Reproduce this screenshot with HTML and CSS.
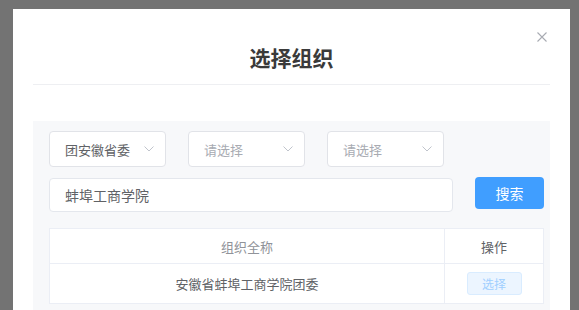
FILE: index.html
```html
<!DOCTYPE html>
<html lang="zh-CN">
<head>
  <meta charset="UTF-8">
  <meta name="viewport" content="width=device-width, initial-scale=1.0">
  <title>选择组织</title>
  <link rel="stylesheet" href="styles.css">
</head>
<body>
  <div class="dialog">
    <div class="dialog-header">
      <h2 class="dialog-title">选择组织</h2>
      <button class="dialog-close" aria-label="关闭">
        <svg width="10" height="10" viewBox="0 0 10 10"><path d="M0.5 0.5 L9.5 9.5 M9.5 0.5 L0.5 9.5" stroke="#a8abb2" stroke-width="1.1" fill="none"/></svg>
      </button>
    </div>

    <div class="dialog-body">
      <div class="panel">
        <div class="filter-row">
          <div class="select">
            <span class="select-value">团安徽省委</span>
            <svg class="chevron" width="10" height="6" viewBox="0 0 10 6"><path d="M0.5 0.5 L5 5 L9.5 0.5" stroke="#c0c4cc" fill="none"/></svg>
          </div>
          <div class="select">
            <span class="select-value placeholder">请选择</span>
            <svg class="chevron" width="10" height="6" viewBox="0 0 10 6"><path d="M0.5 0.5 L5 5 L9.5 0.5" stroke="#c0c4cc" fill="none"/></svg>
          </div>
          <div class="select">
            <span class="select-value placeholder">请选择</span>
            <svg class="chevron" width="10" height="6" viewBox="0 0 10 6"><path d="M0.5 0.5 L5 5 L9.5 0.5" stroke="#c0c4cc" fill="none"/></svg>
          </div>
        </div>

        <div class="search-row">
          <input class="search-input" type="text" value="蚌埠工商学院">
          <button class="btn-search">搜索</button>
        </div>

        <table class="org-table">
          <thead>
            <tr>
              <th class="col-name">组织全称</th>
              <th class="col-op">操作</th>
            </tr>
          </thead>
          <tbody>
            <tr>
              <td>安徽省蚌埠工商学院团委</td>
              <td><button class="btn-pick">选择</button></td>
            </tr>
          </tbody>
        </table>
      </div>
    </div>
  </div>
</body>
</html>
```

FILE: styles.css
```css
* { box-sizing: border-box; }
body { margin: 0; height: 310px; overflow: hidden; background: #737373; font-family: "Noto Sans CJK SC", "Noto Sans", sans-serif; color: #606266; }

.dialog { position: relative; margin: 9px 9px 0 13px; height: 301px; background: #fff; padding: 0 20px; }
.dialog-header { padding-top: 34px; padding-bottom: 13px; border-bottom: 1px solid #eeeff2; }
.dialog-title { margin: 0; height: 28px; line-height: 28px; text-align: center; font-size: 21px; font-weight: 600; color: #3a3a3a; }
.dialog-close { position: absolute; top: 23px; right: 23px; width: 10px; height: 10px; padding: 0; border: 0; background: none; display: flex; }

.dialog-body { padding-top: 36px; }
.panel { background: #f7f8fa; padding: 10px 6px 0 16px; height: 200px; }

.filter-row { display: flex; gap: 22px; }
.select { width: 117px; height: 36px; border: 1px solid #e1e3e8; border-radius: 4px; background: #fff; display: flex; align-items: center; justify-content: space-between; padding: 0 11px 0 15px; font-size: 13px; }
.select-value { color: #606266; }
.select-value.placeholder { color: #a8abb2; }

.search-row { display: flex; gap: 22px; margin-top: 11px; align-items: flex-start; }
.search-input { width: 405px; height: 34px; border: 1px solid #e4e7ed; border-radius: 4px; padding: 0 15px; font: 14px "Noto Sans CJK SC", sans-serif; color: #606266; background: #fff; outline: none; }
.btn-search { width: 69px; height: 32px; margin-top: -1px; border: 0; border-radius: 4px; background: #409eff; color: #fff; font: 14px "Noto Sans CJK SC", sans-serif; }

.org-table { margin-top: 16px; width: 495px; border-collapse: collapse; background: #fff; font-size: 13px; }
.org-table th, .org-table td { border: 1px solid #ebeef5; text-align: center; padding: 0; font-weight: normal; }
.org-table th { height: 35px; }
.org-table td { height: 40px; color: #606266; }
.col-name { width: 395px; color: #909399; }
.col-op { color: #606266; }
.btn-pick { width: 55px; height: 23px; border: 1px solid #d9ecff; border-radius: 3px; background: #ecf5ff; color: #a0cfff; font: 12px "Noto Sans CJK SC", sans-serif; padding: 0; }
```
